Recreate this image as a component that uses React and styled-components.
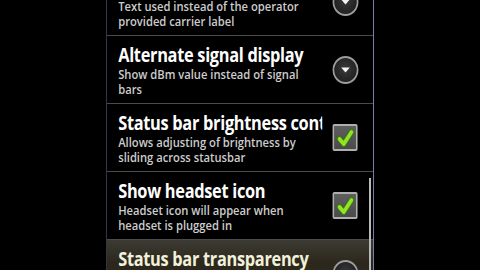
import styled, { createGlobalStyle } from "styled-components";

const GlobalStyle = createGlobalStyle`
  html, body {
    margin: 0;
    padding: 0;
    background: #000;
  }
  body {
    width: 480px;
    height: 270px;
    overflow: hidden;
    font-family: "Open Sans", "DejaVu Sans", sans-serif;
  }
`;

const prefs = [
  {
    title: "Custom carrier label",
    summary: "Text used instead of the operator provided carrier label",
    widget: "list",
  },
  {
    title: "Alternate signal display",
    summary: "Show dBm value instead of signal bars",
    widget: "list",
  },
  {
    title: "Status bar brightness control",
    summary: "Allows adjusting of brightness by sliding across statusbar",
    widget: "check",
  },
  {
    title: "Show headset icon",
    summary: "Headset icon will appear when headset is plugged in",
    widget: "check",
  },
  {
    title: "Status bar transparency",
    summary: "Choose the transparency of the status bar",
    widget: "list",
    focused: true,
  },
];

function Arrow({ className }) {
  return (
    <div className={className}>
      <svg width="12" height="6" viewBox="0 0 12 6">
        <path d="M1 0.5 L11 0.5 L6 5.5 Z" fill="#f4f4f4" />
      </svg>
    </div>
  );
}

const ListButton = styled(Arrow)`
  width: 30px;
  height: 28px;
  box-sizing: border-box;
  border-radius: 50%;
  border: 2px solid #9c9c9c;
  background: radial-gradient(circle at 50% 45%, #3a3a3a 0%, #222 70%);
  display: flex;
  align-items: center;
  justify-content: center;
  flex-shrink: 0;
`;

function Check({ className }) {
  return (
    <div className={className}>
      <svg width="22" height="20" viewBox="0 0 22 20">
        <path
          d="M4 11 L9 16 L18 4"
          fill="none"
          stroke="#3d7a0c"
          strokeWidth="6"
          strokeLinecap="round"
          strokeLinejoin="round"
        />
        <path
          d="M4 11 L9 16 L18 4"
          fill="none"
          stroke="#8fe525"
          strokeWidth="4"
          strokeLinecap="round"
          strokeLinejoin="round"
        />
      </svg>
    </div>
  );
}

const CheckBox = styled(Check)`
  width: 29px;
  height: 27px;
  box-sizing: border-box;
  border-radius: 2px;
  border: 2px solid #aeaeae;
  background: linear-gradient(#5e5e5e, #4a4a4a);
  display: flex;
  align-items: center;
  justify-content: center;
  flex-shrink: 0;
  margin-right: 1px;
`;

const Frame = styled.div`
  position: relative;
  margin-left: 106px;
  width: 266px;
  height: 270px;
  border-left: 1px solid #2f3846;
  border-right: 1px solid #7880a6;
  overflow: hidden;
  background: #000;
`;

const Screen = styled.div`
  width: 309px;
  transform: scaleX(0.861);
  transform-origin: left top;
`;

const List = styled.div`
  margin-top: -32px;
`;

const Row = styled.div`
  height: 67px;
  display: flex;
  align-items: center;
  gap: 12px;
  padding: 0 17px 0 13px;
  border-bottom: 1px solid #4a4a4a;
  background: ${(p) =>
    p.$focused
      ? "linear-gradient(#3c3b33 0%, #2c271c 35%, #30291b 100%)"
      : "#000"};
`;

const Texts = styled.div`
  flex: 1;
  min-width: 0;
  overflow: hidden;
`;

const Title = styled.div`
  font-size: 19px;
  line-height: 24px;
  font-weight: 700;
  letter-spacing: -0.35px;
  color: ${(p) => (p.$focused ? "#f2f1dc" : "#fff")};
  white-space: nowrap;
  overflow: hidden;
`;

const Summary = styled.div`
  font-size: 13px;
  line-height: 15px;
  font-weight: 600;
  color: #cdcdcd;
  padding-right: 14px;
`;

const ScrollThumb = styled.div`
  position: absolute;
  right: 2px;
  top: 178px;
  width: 2px;
  height: 100px;
  background: #b8b8b8;
`;

export default function App() {
  return (
    <>
      <GlobalStyle />
      <Frame>
        <Screen>
          <List>
            {prefs.map((p) => (
              <Row key={p.title} $focused={p.focused}>
                <Texts>
                  <Title $focused={p.focused}>{p.title}</Title>
                  <Summary>{p.summary}</Summary>
                </Texts>
                {p.widget === "check" ? <CheckBox /> : <ListButton />}
              </Row>
            ))}
          </List>
        </Screen>
        <ScrollThumb />
      </Frame>
    </>
  );
}
